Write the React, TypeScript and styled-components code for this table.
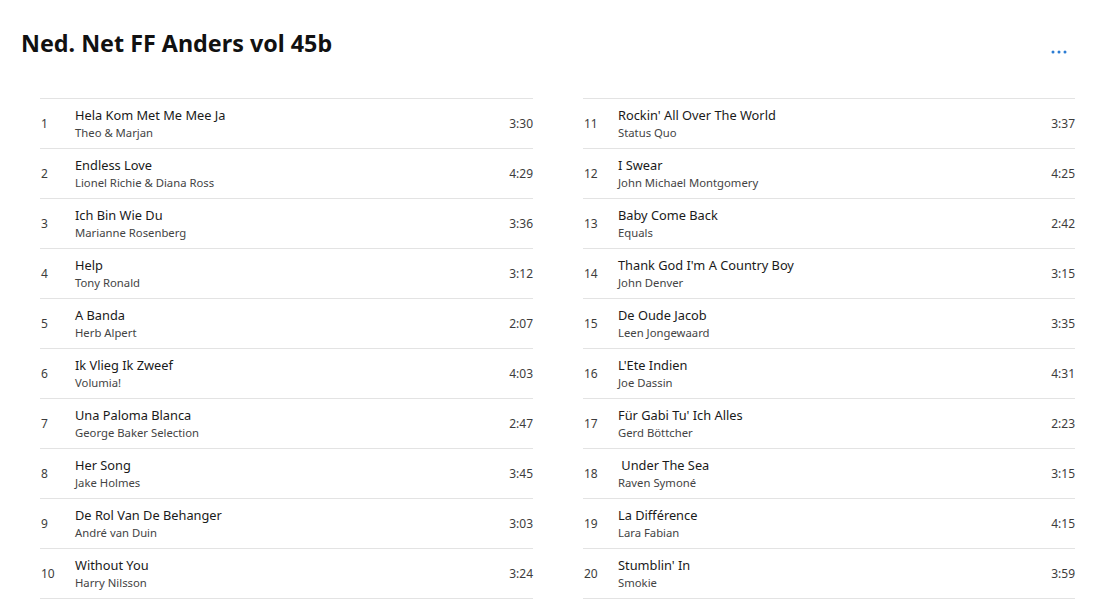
import React from "react";
import styled, { createGlobalStyle } from "styled-components";

interface Track {
	n: number
	title: string
	artist: string
	time: string
}

const tracks: Track[] = [
	{ n: 1, title: "Hela Kom Met Me Mee Ja", artist: "Theo & Marjan", time: "3:30" },
	{ n: 2, title: "Endless Love", artist: "Lionel Richie & Diana Ross", time: "4:29" },
	{ n: 3, title: "Ich Bin Wie Du", artist: "Marianne Rosenberg", time: "3:36" },
	{ n: 4, title: "Help", artist: "Tony Ronald", time: "3:12" },
	{ n: 5, title: "A Banda", artist: "Herb Alpert", time: "2:07" },
	{ n: 6, title: "Ik Vlieg Ik Zweef", artist: "Volumia!", time: "4:03" },
	{ n: 7, title: "Una Paloma Blanca", artist: "George Baker Selection", time: "2:47" },
	{ n: 8, title: "Her Song", artist: "Jake Holmes", time: "3:45" },
	{ n: 9, title: "De Rol Van De Behanger", artist: "André van Duin", time: "3:03" },
	{ n: 10, title: "Without You", artist: "Harry Nilsson", time: "3:24" },
	{ n: 11, title: "Rockin' All Over The World", artist: "Status Quo", time: "3:37" },
	{ n: 12, title: "I Swear", artist: "John Michael Montgomery", time: "4:25" },
	{ n: 13, title: "Baby Come Back", artist: "Equals", time: "2:42" },
	{ n: 14, title: "Thank God I'm A Country Boy", artist: "John Denver", time: "3:15" },
	{ n: 15, title: "De Oude Jacob", artist: "Leen Jongewaard", time: "3:35" },
	{ n: 16, title: "L'Ete Indien", artist: "Joe Dassin", time: "4:31" },
	{ n: 17, title: "Für Gabi Tu' Ich Alles", artist: "Gerd Böttcher", time: "2:23" },
	{ n: 18, title: "\u00a0Under The Sea", artist: "Raven Symoné", time: "3:15" },
	{ n: 19, title: "La Différence", artist: "Lara Fabian", time: "4:15" },
	{ n: 20, title: "Stumblin' In", artist: "Smokie", time: "3:59" },
];

const GlobalStyle = createGlobalStyle`
	html, body {
		margin: 0;
		padding: 0;
		background: #ffffff;
	}
	body {
		font-family: "Noto Sans", "Open Sans", sans-serif;
		color: #1a1a1a;
	}
`;

export default function App() {
	const left = tracks.slice(0, 10);
	const right = tracks.slice(10);
	return (
		<Page>
			<GlobalStyle />
			<Header>
				<Title>Ned. Net FF Anders vol 45b</Title>
				<MoreButton aria-label="Meer">
					<svg width="16" height="4" viewBox="0 0 16 4">
						<circle cx="2" cy="2" r="1.5" fill="#2b7cd3" />
						<circle cx="8" cy="2" r="1.5" fill="#2b7cd3" />
						<circle cx="14" cy="2" r="1.5" fill="#2b7cd3" />
					</svg>
				</MoreButton>
			</Header>
			<Columns>
				<TrackList tracks={left} />
				<TrackList tracks={right} />
			</Columns>
		</Page>
	);
}

const TrackList: React.FC<{ tracks: Track[] }> = ({ tracks }) => {
	return (
		<List>
			{tracks.map((t) => (
				<Row key={t.n}>
					<Num>{t.n}</Num>
					<Info>
						<SongTitle>{t.title}</SongTitle>
						<Artist>{t.artist}</Artist>
					</Info>
					<Time>{t.time}</Time>
				</Row>
			))}
		</List>
	);
};

const Page = styled.div`
	width: 1110px;
	height: 602px;
	overflow: hidden;
	box-sizing: border-box;
	padding: 27px 35px 0 21px;
`;

const Header = styled.div`
	display: flex;
	align-items: flex-start;
	justify-content: space-between;
	height: 71px;
`;

const Title = styled.h1`
	margin: 0;
	font-size: 23.3px;
	font-weight: 700;
	line-height: 32px;
	color: #111111;
`;

const MoreButton = styled.button`
	display: flex;
	align-items: center;
	justify-content: center;
	width: 24px;
	height: 24px;
	margin-top: 13px;
	margin-right: 4px;
	padding: 0;
	border: none;
	background: transparent;
`;

const Columns = styled.div`
	display: grid;
	grid-template-columns: 493px 492px;
	column-gap: 50px;
	padding-left: 19px;
`;

const List = styled.div`
	border-top: 1px solid #e3e3e3;
`;

const Row = styled.div`
	display: flex;
	align-items: center;
	height: 49px;
	border-bottom: 1px solid #e3e3e3;
`;

const Num = styled.span`
	width: 34px;
	flex-shrink: 0;
	padding-left: 1px;
	font-size: 12px;
	color: #3d3d3d;
`;

const Info = styled.div`
	display: flex;
	flex-direction: column;
	flex: 1;
	min-width: 0;
	padding-top: 1px;
`;

const SongTitle = styled.span`
	font-size: 12.8px;
	line-height: 17px;
	color: #1a1a1a;
	white-space: pre;
`;

const Artist = styled.span`
	font-size: 11.3px;
	line-height: 17px;
	color: #444444;
`;

const Time = styled.span`
	font-size: 12px;
	color: #3d3d3d;
`;
